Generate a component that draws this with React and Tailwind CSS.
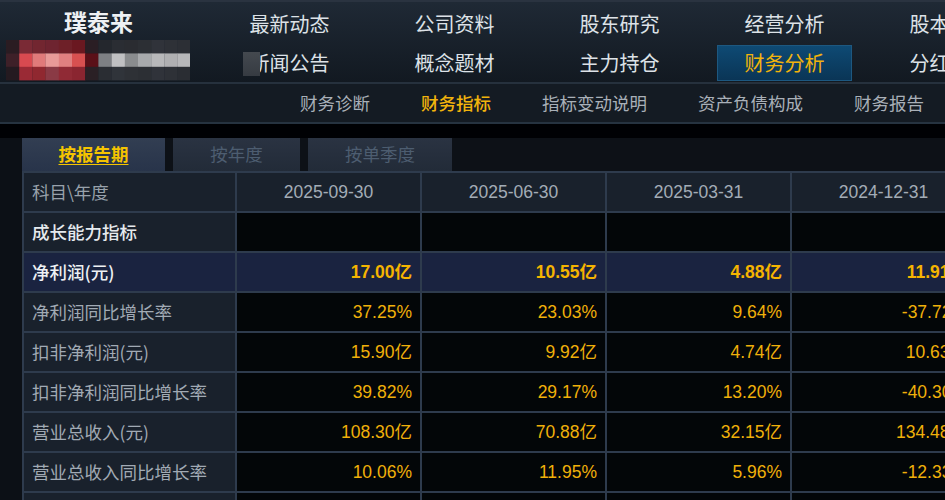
import React from "react";

const CJK = { fontFamily: '"Noto Sans CJK SC", "Noto Sans", sans-serif' };
const NUM = { fontFamily: '"Liberation Sans", "Noto Sans CJK SC", sans-serif' };

const nav1 = ["最新动态", "公司资料", "股东研究", "经营分析", "股本结构"];
const nav2 = ["新闻公告", "概念题材", "主力持仓", "财务分析", "分红融资"];

const dates = ["2025-09-30", "2025-06-30", "2025-03-31", "2024-12-31"];

const rows = [
  { label: "净利润(元)", vals: ["17.00亿", "10.55亿", "4.88亿", "11.91亿"], hl: true },
  { label: "净利润同比增长率", vals: ["37.25%", "23.03%", "9.64%", "-37.72%"] },
  { label: "扣非净利润(元)", vals: ["15.90亿", "9.92亿", "4.74亿", "10.63亿"] },
  { label: "扣非净利润同比增长率", vals: ["39.82%", "29.17%", "13.20%", "-40.30%"] },
  { label: "营业总收入(元)", vals: ["108.30亿", "70.88亿", "32.15亿", "134.48亿"] },
  { label: "营业总收入同比增长率", vals: ["10.06%", "11.95%", "5.96%", "-12.33%"] },
];

const pix = [
  ["#2a1c22", "#7a2a35", "#722630", "#6e2430", "#6e2028", "#6a1820", "#2a1e24", "#24272d", "#2a2d33", "#2a2c31", "#2c2f34", "#30333a", "#2e3137", "#2c2f35"],
  ["#3e2028", "#d84a50", "#e07a7a", "#e89a98", "#e08080", "#d85050", "#5a1018", "#7e8084", "#c0c0c2", "#8a8c8e", "#a8aaac", "#b8b8ba", "#b0b0b2", "#b8b8ba"],
  ["#241a20", "#9a2a35", "#902830", "#8a3a45", "#902a35", "#8a2530", "#2a2025", "#2a2d33", "#30343a", "#2e3136", "#2c2f34", "#30333a", "#2e3137", "#2a2d33"],
];

function Censor() {
  return (
    <svg width="184" height="42" viewBox="0 0 184 42" className="block">
      {pix.map((r, i) =>
        r.map((c, j) => (
          <rect key={i + "-" + j} x={j * 13.2} y={i * 13.4} width="13.4" height="13.6" fill={c} />
        ))
      )}
    </svg>
  );
}

export default function App() {
  return (
    <div className="w-[945px] h-[500px] overflow-hidden bg-[#000205] relative" style={CJK}>
      {/* Header */}
      <div className="h-[84px] flex bg-gradient-to-b from-[#1f2935] to-[#121921] border-t-2 border-[#2a3340] border-b-2 border-b-[#26313d] relative">
        <div className="w-[207px] shrink-0 flex flex-col">
          <div className="h-[38px] flex items-center pl-[64px] text-[23px] font-bold text-[#eef1f4] leading-none">
            璞泰来
          </div>
          <div className="pl-[6px]">
            <Censor />
          </div>
        </div>
        <div className="flex-1 flex flex-col pt-[2px]">
          <div className="h-[40px] flex">
            {nav1.map((t) => (
              <div key={t} className="w-[165px] shrink-0 flex items-center justify-center text-[20px] text-[#dde2e7] whitespace-nowrap">
                {t}
              </div>
            ))}
          </div>
          <div className="h-[38px] flex">
            {nav2.map((t) => (
              <div key={t} className="w-[165px] shrink-0 flex items-center justify-center whitespace-nowrap">
                {t === "财务分析" ? (
                  <div className="w-[135px] h-[36px] flex items-center justify-center bg-gradient-to-b from-[#0e4a74] to-[#0a3556] border border-[#1d5880] text-[20px] text-[#f2b40c]">
                    {t}
                  </div>
                ) : (
                  <span className="text-[20px] text-[#dde2e7]">{t}</span>
                )}
              </div>
            ))}
          </div>
        </div>
        <div className="absolute z-10 left-[243px] top-[50px] w-[17px] h-[24px] bg-gradient-to-b from-[#44494f] to-[#363b42]" />
      </div>

      {/* Sub nav */}
      <div className="h-[40px] flex items-center bg-[#141b23] border-b-2 border-[#263340] pl-[300px] text-[17.5px] text-[#a9b0b8] whitespace-nowrap">
        <span>财务诊断</span>
        <span className="ml-[51px] text-[#f2b40c] font-medium">财务指标</span>
        <span className="ml-[51px]">指标变动说明</span>
        <span className="ml-[51px]">资产负债构成</span>
        <span className="ml-[51px]">财务报告</span>
      </div>

      {/* Body */}
      <div className="h-[14px] bg-[#000104]" />
      <div className="flex bg-[#0c1016]">
        <div className="w-[22px] shrink-0" />
        <div className="flex-1 flex flex-col">
          {/* Tabs */}
          <div className="h-[33px] flex gap-[8px] bg-[#0d1117]">
            <div className="w-[143px] flex items-center justify-center bg-gradient-to-b from-[#323e52] to-[#28344a] text-[17.5px] font-bold text-[#f5c400] underline underline-offset-[3px]">
              按报告期
            </div>
            <div className="w-[127px] flex items-center justify-center bg-gradient-to-b from-[#2a3342] to-[#222b38] text-[17.5px] text-[#4d5d70]">
              按年度
            </div>
            <div className="w-[144px] flex items-center justify-center bg-gradient-to-b from-[#2a3342] to-[#222b38] text-[17.5px] text-[#4d5d70]">
              按单季度
            </div>
          </div>
          {/* Table */}
          <div className="grid grid-cols-[211px_183px_183px_183px_183px] gap-[2px] p-[2px] pb-0 bg-[#2e3b4d] w-max">
            <div className="h-[38px] bg-[#19212c] flex items-center pl-[8px] text-[17.5px] text-[#98a1ab]">科目\年度</div>
            {dates.map((d) => (
              <div key={d} className="h-[38px] bg-[#19212c] flex items-center justify-center text-[17.5px] text-[#a3acb6]" style={NUM}>
                {d}
              </div>
            ))}
            <div className="h-[38px] bg-[#19212c] flex items-center pl-[8px] text-[17.5px] font-medium text-[#e6eaee]">成长能力指标</div>
            {dates.map((d) => (
              <div key={"e" + d} className="h-[38px] bg-[#030608]" />
            ))}
            {rows.map((r) => (
              <React.Fragment key={r.label}>
                <div
                  className={
                    "h-[38px] flex items-center pl-[8px] text-[17.5px] whitespace-nowrap " +
                    (r.hl ? "bg-[#1a2340] text-[#eef1f4] font-medium" : "bg-[#19212c] text-[#a1aab4]")
                  }
                >
                  {r.label}
                </div>
                {r.vals.map((v, i) => (
                  <div
                    key={i}
                    className={
                      "h-[38px] flex items-center justify-end pr-[8px] text-[17.5px] whitespace-nowrap " +
                      (r.hl ? "bg-[#1a2340] font-bold text-[#f5b400]" : "bg-[#030608] text-[#f0b00a]")
                    }
                    style={NUM}
                  >
                    {v}
                  </div>
                ))}
              </React.Fragment>
            ))}
            <div className="h-[38px] bg-[#19212c]" />
            {dates.map((d) => (
              <div key={"z" + d} className="h-[38px] bg-[#030608]" />
            ))}
          </div>
        </div>
      </div>
    </div>
  );
}
